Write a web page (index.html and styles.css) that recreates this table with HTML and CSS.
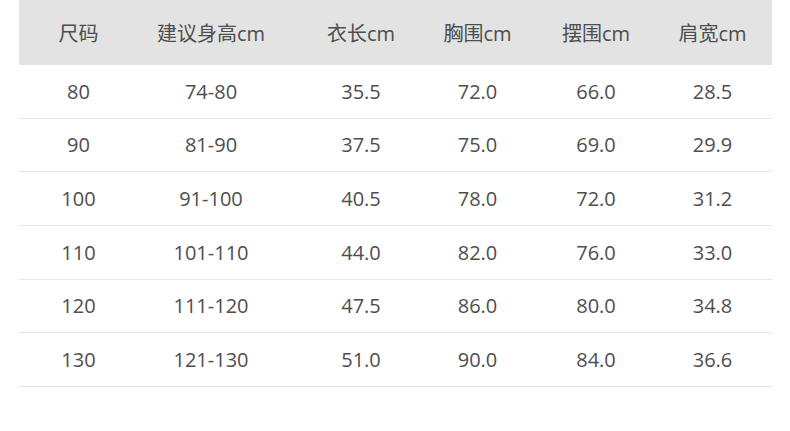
FILE: index.html
```html
<!DOCTYPE html>
<html lang="zh-CN">
<head>
<meta charset="utf-8">
<link rel="stylesheet" href="styles.css">
</head>
<body>
<div class="table">
  <div class="row head">
    <div class="cell">尺码</div><div class="cell">建议身高cm</div><div class="cell">衣长cm</div><div class="cell">胸围cm</div><div class="cell">摆围cm</div><div class="cell">肩宽cm</div>
  </div>
  <div class="row"><div class="cell">80</div><div class="cell">74-80</div><div class="cell">35.5</div><div class="cell">72.0</div><div class="cell">66.0</div><div class="cell">28.5</div></div>
  <div class="row"><div class="cell">90</div><div class="cell">81-90</div><div class="cell">37.5</div><div class="cell">75.0</div><div class="cell">69.0</div><div class="cell">29.9</div></div>
  <div class="row"><div class="cell">100</div><div class="cell">91-100</div><div class="cell">40.5</div><div class="cell">78.0</div><div class="cell">72.0</div><div class="cell">31.2</div></div>
  <div class="row"><div class="cell">110</div><div class="cell">101-110</div><div class="cell">44.0</div><div class="cell">82.0</div><div class="cell">76.0</div><div class="cell">33.0</div></div>
  <div class="row"><div class="cell">120</div><div class="cell">111-120</div><div class="cell">47.5</div><div class="cell">86.0</div><div class="cell">80.0</div><div class="cell">34.8</div></div>
  <div class="row"><div class="cell">130</div><div class="cell">121-130</div><div class="cell">51.0</div><div class="cell">90.0</div><div class="cell">84.0</div><div class="cell">36.6</div></div>
</div>
</body>
</html>
```
FILE: styles.css
```css
html, body {
  margin: 0;
  padding: 0;
  background: #ffffff;
}
body {
  font-family: "Open Sans", "Noto Sans CJK SC", sans-serif;
  font-size: 20px;
  color: #4e4e4e;
}
.table {
  margin-left: 19px;
  width: 753px;
}
.row {
  display: grid;
  grid-template-columns: 119px 146px 154px 79px 158px 75px 1fr;
  align-items: center;
  height: 53.67px;
  box-sizing: border-box;
  border-bottom: 1px solid #e6e6e6;
}
.row.head {
  height: 65px;
  background: #e3e3e3;
  border-bottom: none;
  padding-bottom: 1px;
  font-size: 20px;
}
.cell {
  text-align: center;
  white-space: nowrap;
}
```
